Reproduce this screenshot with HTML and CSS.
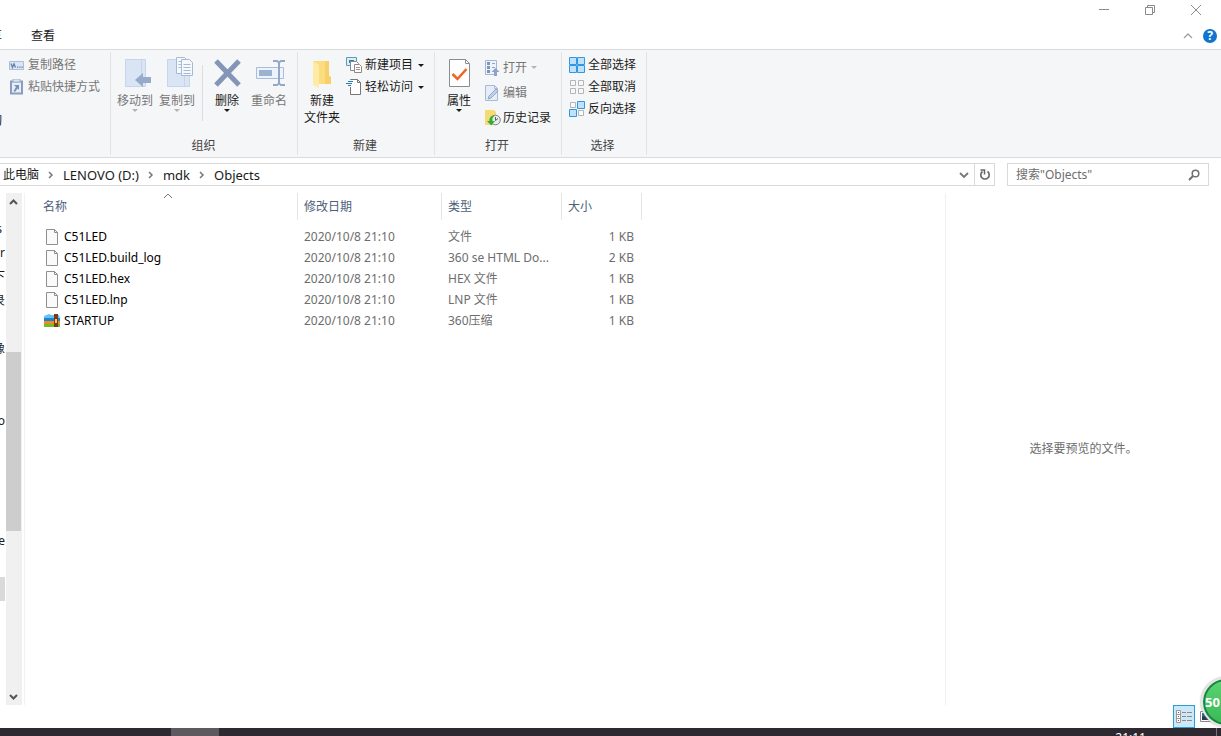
FILE: index.html
```html
<!DOCTYPE html>
<html lang="zh-CN">
<head>
<meta charset="utf-8">
<title>Objects</title>
<link rel="stylesheet" href="styles.css">
</head>
<body>
<div class="window">
  <header class="titlebar">
    <button class="caption" aria-label="最小化"><svg width="12" height="12" viewBox="0 0 12 12"><path d="M1 5.500H11" stroke="#8a8a8a"/></svg></button>
    <button class="caption" aria-label="还原"><svg width="12" height="12" viewBox="0 0 12 12" fill="none" stroke="#8a8a8a"><path d="M1.500 3.500h7v7h-7zM3.500 3V1.500h7v7H9"/></svg></button>
    <button class="caption" aria-label="关闭"><svg width="12" height="12" viewBox="0 0 12 12"><path d="M1 1l10 10M11 1L1 11" stroke="#8a8a8a"/></svg></button>
  </header>

  <nav class="tabs">
    <button class="tab tab-cut"><span>享</span></button>
    <button class="tab">查看</button>
    <span class="spacer"></span>
    <button class="plain" aria-label="折叠功能区"><svg width="10" height="8" viewBox="0 0 10 8"><path d="M1 6l4-4 4 4" fill="none" stroke="#a0a0a0" stroke-width="1.300"/></svg></button>
    <button class="help" aria-label="帮助">?</button>
  </nav>

  <section class="ribbon">
    <div class="group g-clip">
      <div class="tools">
        <div class="stack">
          <button class="small off"><svg width="16" height="16" viewBox="0 0 16 16"><path d="M.5 4.500h14v8H.5z" fill="#dbe5f3" stroke="#aebed6"/><path d="M2 6.500l1.500 4L5 7l1.500 3.500" fill="none" stroke="#657fa8" stroke-width="1.300"/><path d="M8 9.500h1.300v1.300H8zM10.300 9.500h1.300v1.300h-1.300zM12.500 9.500h1.300v1.300h-1.300z" fill="#657fa8"/></svg>复制路径</button>
          <button class="small off"><svg width="16" height="16" viewBox="0 0 16 16"><path d="M2 2.500h11v12H2z" fill="#e6eefa" stroke="#8b9dbe" stroke-width="2"/><path d="M4 0h7v3H4z" fill="#dbe3ef" stroke="#a4b2c9"/><path d="M5 6h5v5L8.500 9.500 6 13l-1.500-1L7 8z" fill="#7890b8"/></svg>粘贴快捷方式</button>
        </div>
      </div>
      <span class="cut-label">切</span>
    </div>

    <div class="group g-org">
      <div class="tools">
        <button class="big off"><svg width="32" height="32" viewBox="0 0 32 32"><path d="M6.500 2.500h20v27h-20z" fill="#d9e5f5" stroke="#c6d5ea"/><path d="M22.500 3v26" stroke="#c6d5ea"/><path d="M16 23l8-7v4h8v6h-8v4z" fill="#97aac9"/></svg>移动到<i class="drop"></i></button>
        <button class="big off"><svg width="32" height="32" viewBox="0 0 32 32"><path d="M6.500 2.500h22v27h-22z" fill="#d9e5f5" stroke="#c6d5ea"/><path d="M23.500 3v26" stroke="#c6d5ea"/><path d="M15.500.5h8l3 3v13h-11z" fill="#f5f8fc" stroke="#a8b9d3"/><path d="M20.500 2.500h8l3 3v13H20.500z" fill="#f5f8fc" stroke="#a8b9d3"/><path d="M17.500 4.500h3m-3 3h3m-3 3h3m2-3h7m-7 3h7m-7 3h7m-7 3h7" stroke="#a8b9d3"/></svg>复制到<i class="drop"></i></button>
        <span class="divider"></span>
        <button class="big"><svg width="32" height="32" viewBox="0 0 32 32"><path d="M5 4l23 24M28 4L5 28" stroke="#8496b8" stroke-width="5"/></svg>删除<i class="drop"></i></button>
        <button class="big off"><svg width="32" height="32" viewBox="0 0 32 32"><path d="M3.500 10.500h27v11h-27z" fill="#edf3fb" stroke="#a9bddb"/><path d="M6 13h13v6H6z" fill="#9db2d1"/><path d="M20 4h4l2 1.500L28 4h4M20 28h4l2-1.500 2 1.500h4M26 5v22" fill="none" stroke="#93a8c9" stroke-width="2"/></svg>重命名</button>
      </div>
      <div class="caption-text">组织</div>
    </div>

    <div class="group g-new">
      <div class="tools">
        <button class="big"><svg width="32" height="32" viewBox="0 0 32 32"><path d="M7 4h16v15l2 1v7H7z" fill="#fbdc7e"/><path d="M19 4h4v15l2 1v7h-6z" fill="#f7d068"/><path d="M7 4l6 4v23l-6-3z" fill="#ffeaa6"/></svg>新建<br>文件夹</button>
        <div class="stack">
          <button class="small"><svg width="16" height="16" viewBox="0 0 16 16"><path d="M.5.5h10v8H.5z" fill="#d8effa" stroke="#5b9bb7"/><path d="M3 3h5v3H3z" fill="#367e9f"/><path d="M4.500 4.500h6l2 2v7h-8z" fill="#fff" stroke="#8a8a8a"/><path d="M8.500 7.500h5l2 2v6h-7z" fill="#fff" stroke="#8a8a8a"/><path d="M10 10.500h4m-4 2h4" stroke="#b88"/></svg>新建项目<i class="drop"></i></button>
          <button class="small"><svg width="16" height="16" viewBox="0 0 16 16"><path d="M4.500.5h7l3 3v12h-10z" fill="#fff" stroke="#777"/><path d="M11.500.5v3h3" fill="none" stroke="#777"/><path d="M3 1h3v7H3z" fill="#f5f6f7"/><path d="M2 2.500h5M0 4.500h6M2 6.500h3" stroke="#287bb5"/></svg>轻松访问<i class="drop"></i></button>
        </div>
      </div>
      <div class="caption-text">新建</div>
    </div>

    <div class="group g-open">
      <div class="tools">
        <button class="big"><svg width="32" height="32" viewBox="0 0 32 32"><path d="M6.500 2.500h16l4 4v23h-20z" fill="#fff" stroke="#8c8c8c"/><path d="M22.500 2.500v4h4" fill="none" stroke="#8c8c8c"/><path d="M9.500 17l5 5 9-10" fill="none" stroke="#ee6423" stroke-width="2.500"/></svg>属性<i class="drop"></i></button>
        <div class="stack loose">
          <button class="small off"><svg width="16" height="16" viewBox="0 0 16 16"><path d="M.5.5h11v14H.5z" fill="#eef3fb" stroke="#a4b6d2"/><path d="M2 2h3v3H2zM2 6h3v3H2zM2 10h3v3H2z" fill="#7f95bb"/><path d="M7 3.500h3M7 7.500h3" stroke="#91a5c7"/><path d="M10.500 8l4 4H12v4H9v-4H6.500z" fill="#8ea2c5"/></svg>打开<i class="drop"></i></button>
          <button class="small off"><svg width="16" height="16" viewBox="0 0 16 16"><path d="M.5.5h9l3 3v12H.5z" fill="#e5edf8" stroke="#a9bad4"/><path d="M9.500.5v3h3" fill="none" stroke="#a9bad4"/><path d="M3 14l1-3 7-7 2 2-7 7z" fill="#c2d1e8" stroke="#91a6c9"/></svg>编辑</button>
          <button class="small"><svg width="16" height="16" viewBox="0 0 16 16"><path d="M0 0h9l2 2v13H0z" fill="#f8da75"/><circle cx="10.500" cy="10" r="4.800" fill="#e9ecec" stroke="#7d8588"/><path d="M10.500 7v3.500l2.500-2" fill="none" stroke="#596064"/><path d="M10 5.500C6 5 4 8 4.500 11H2l4.200 4.500L10 11H7.500C7 9 7.500 7 10 5.500z" fill="#35ad35"/></svg>历史记录</button>
        </div>
      </div>
      <div class="caption-text">打开</div>
    </div>

    <div class="group g-sel">
      <div class="tools">
        <div class="stack">
          <button class="small"><svg width="16" height="16" viewBox="0 0 16 16" fill="#bfe2fa" stroke="#3297e3"><path d="M.5.5h7v7h-7zM8.500.5h7v7h-7zM.5 8.500h7v7h-7zM8.500 8.500h7v7h-7z"/></svg>全部选择</button>
          <button class="small"><svg width="16" height="16" viewBox="0 0 16 16" fill="#fafafa" stroke="#b5b5b5"><path d="M1.500 1.500h5v5h-5zM9.500 1.500h5v5h-5zM1.500 9.500h5v5h-5zM9.500 9.500h5v5h-5z"/></svg>全部取消</button>
          <button class="small"><svg width="16" height="16" viewBox="0 0 16 16"><path d="M1.500 1.500h5v5h-5zM9.500 9.500h5v5h-5z" fill="#fafafa" stroke="#b5b5b5"/><path d="M8.500.5h7v7h-7zM.5 8.500h7v7h-7z" fill="#bfe2fa" stroke="#3297e3"/></svg>反向选择</button>
        </div>
      </div>
      <div class="caption-text">选择</div>
    </div>
  </section>

  <section class="address-row">
    <div class="address">
      <a href="#">此电脑</a><svg class="sep" width="6" height="8" viewBox="0 0 6 8"><path d="M1 1l3 3-3 3"/></svg>
      <a class="latin" href="#">LENOVO (D:)</a><svg class="sep" width="6" height="8" viewBox="0 0 6 8"><path d="M1 1l3 3-3 3"/></svg>
      <a class="latin" href="#">mdk</a><svg class="sep" width="6" height="8" viewBox="0 0 6 8"><path d="M1 1l3 3-3 3"/></svg>
      <a class="latin" href="#">Objects</a>
      <span class="spacer"></span>
      <button class="plain history" aria-label="以前的位置"><svg width="10" height="8" viewBox="0 0 10 8"><path d="M1 2l4 4 4-4" fill="none" stroke="#777" stroke-width="1.800"/></svg></button>
      <button class="plain refresh" aria-label="刷新"><svg width="12" height="12" viewBox="0 0 12 12"><path d="M8.500 2.500A4.200 4.200 0 1 1 3.500 2.500" fill="none" stroke="#666" stroke-width="1.600"/><path d="M1.500 1H5.500v4.500" fill="none" stroke="#666" stroke-width="1.500"/></svg></button>
    </div>
    <label class="search">
      <input type="text" placeholder='搜索"Objects"' aria-label="搜索">
      <svg width="12" height="12" viewBox="0 0 12 12" fill="none" stroke="#707070"><circle cx="7.500" cy="4.500" r="3.300" stroke-width="1.500"/><path d="M5 7L1 11" stroke-width="2"/></svg>
    </label>
  </section>

  <main class="content">
    <aside class="tree">
      <div class="node"><span>s</span>&nbsp;</div>
      <div class="node">r</div>
      <div class="node">下</div>
      <div class="node">录</div>
      <div class="node"></div>
      <div class="node">像</div>
      <div class="node"></div>
      <div class="node"></div>
      <div class="node">Do</div>
      <div class="node"></div>
      <div class="node"></div>
      <div class="node"></div>
      <div class="node"></div>
      <div class="node">e</div>
      <div class="node"></div>
      <div class="node current"></div>
    </aside>
    <div class="scrollbar">
      <svg width="16" height="18" viewBox="0 0 16 18"><path d="M4 11l3.500-3.500L11 11" fill="none" stroke="#555" stroke-width="2"/></svg>
      <div class="track"><div class="thumb"></div></div>
      <svg width="16" height="18" viewBox="0 0 16 18"><path d="M4 8l3.500 3.500L11 8" fill="none" stroke="#555" stroke-width="2"/></svg>
    </div>
    <section class="files">
      <table>
        <colgroup><col class="c-name"><col class="c-date"><col class="c-type"><col class="c-size"></colgroup>
        <thead>
          <tr><th>名称<svg class="sort" width="10" height="6" viewBox="0 0 10 6"><path d="M1 5l4-4 4 4" fill="none" stroke="#777"/></svg></th><th>修改日期</th><th>类型</th><th>大小</th></tr>
        </thead>
        <tbody>
          <tr><td><div class="file"><svg width="16" height="16" viewBox="0 0 16 16"><path d="M2.500.5h8l3 3v12h-11z" fill="#fafafa" stroke="#8f8f8f"/><path d="M10.500.5v3h3" fill="none" stroke="#8f8f8f"/></svg>C51LED</div></td><td>2020/10/8 21:10</td><td>文件</td><td>1 KB</td></tr>
          <tr><td><div class="file"><svg width="16" height="16" viewBox="0 0 16 16"><path d="M2.500.5h8l3 3v12h-11z" fill="#fafafa" stroke="#8f8f8f"/><path d="M10.500.5v3h3" fill="none" stroke="#8f8f8f"/></svg>C51LED.build_log</div></td><td>2020/10/8 21:10</td><td>360 se HTML Do...</td><td>2 KB</td></tr>
          <tr><td><div class="file"><svg width="16" height="16" viewBox="0 0 16 16"><path d="M2.500.5h8l3 3v12h-11z" fill="#fafafa" stroke="#8f8f8f"/><path d="M10.500.5v3h3" fill="none" stroke="#8f8f8f"/></svg>C51LED.hex</div></td><td>2020/10/8 21:10</td><td>HEX 文件</td><td>1 KB</td></tr>
          <tr><td><div class="file"><svg width="16" height="16" viewBox="0 0 16 16"><path d="M2.500.5h8l3 3v12h-11z" fill="#fafafa" stroke="#8f8f8f"/><path d="M10.500.5v3h3" fill="none" stroke="#8f8f8f"/></svg>C51LED.lnp</div></td><td>2020/10/8 21:10</td><td>LNP 文件</td><td>1 KB</td></tr>
          <tr><td><div class="file"><svg width="16" height="16" viewBox="0 0 16 16"><path d="M0 3l5-2 2 1h8l1 3H0z" fill="#62c4f5"/><path d="M0 5h16v4H0z" fill="#1f83d4"/><path d="M0 8h16v4H0z" fill="#f28a1c"/><path d="M0 11h16v3H0z" fill="#6fbd2a"/><path d="M10 1h4v13h-4z" fill="#7b3a1c"/><path d="M11 6h2v4h-2z" fill="#f2c464"/></svg>STARTUP</div></td><td>2020/10/8 21:10</td><td>360压缩</td><td>1 KB</td></tr>
        </tbody>
      </table>
    </section>
    <aside class="preview">选择要预览的文件。</aside>
  </main>

  <footer class="status">
    <button class="view active" aria-label="详细信息"><svg width="16" height="14" viewBox="0 0 16 14"><path d="M.5.5h4v12h-4zM.5 4.500h4m-4 4h4" fill="#fff" stroke="#999"/><path d="M2 2h1v1H2z" fill="#2a6fc0"/><path d="M2 6h1v1H2zM2 10h1v1H2z" fill="#c33"/><path d="M6 2.500h4m1 0h5m-10 4h4m1 0h5m-10 4h4m1 0h5" stroke="#8a8a8a"/></svg></button>
    <button class="view" aria-label="大图标"><svg width="16" height="12" viewBox="0 0 16 12"><path d="M.5.5h15v10H.5z" fill="#fff" stroke="#888"/><path d="M2 2h12v7H2z" fill="#315da8"/><path d="M2 6l4-2 4 3v2H2z" fill="#26384d"/></svg></button>
  </footer>

  <div class="taskbar"><span class="task"></span><span class="clock">21:11</span><span class="desktop"></span></div>
  <div class="meter">50</div>
</div>
</body>
</html>
```
FILE: styles.css
```css
* { box-sizing: border-box; }
body {
  margin: 0;
  font: 12px/16px "Noto Sans", "Noto Sans CJK SC", sans-serif;
  color: #1a1a1a;
  background: #fff;
}
button {
  font: inherit;
  color: inherit;
  background: none;
  border: 0;
  padding: 0;
}
svg { flex: none; display: block; }
a { color: inherit; text-decoration: none; }

.window {
  position: relative;
  display: flex;
  flex-direction: column;
  height: 100vh;
  overflow: hidden;
}
.spacer { flex: 1; }

.titlebar { display: flex; justify-content: flex-end; height: 20px; padding-right: 2px; }
.caption { display: grid; place-items: center; width: 46px; }

.tabs { display: flex; align-items: center; height: 29px; padding: 2px 4px 0 0; }
.tab { padding: 0 18px; }
.tab-cut { display: flex; justify-content: flex-end; width: 2px; margin-right: 11px; padding: 0; overflow: hidden; }
.plain { display: grid; place-items: center; }
.help {
  width: 14px;
  height: 14px;
  margin-left: 10px;
  border-radius: 50%;
  background: #0f75d1;
  color: #fff;
  font-weight: bold;
  line-height: 14px;
}

.ribbon {
  display: flex;
  height: 109px;
  padding: 2px 0;
  background: #f5f6f7;
  border-top: 1px solid #dadbdc;
  border-bottom: 1px solid #dadbdc;
}
.group {
  position: relative;
  display: flex;
  flex-direction: column;
  justify-content: space-between;
  border-right: 1px solid #e2e3e4;
}
.g-clip { width: 111px; padding-left: 9px; }
.g-org { width: 187px; padding-left: 3px; }
.g-new { width: 137px; padding-left: 2px; }
.g-open { width: 127px; padding-left: 2px; }
.g-sel { width: 85px; padding-left: 7px; }
.tools { display: flex; align-items: flex-start; }
.caption-text { padding-right: 4px; text-align: center; color: #444; line-height: 18px; }
.g-sel > .caption-text { padding-right: 10px; }
.cut-label {
  position: absolute;
  left: 0;
  top: 61px;
  display: flex;
  justify-content: flex-end;
  width: 2px;
  overflow: hidden;
}
.big {
  display: flex;
  flex-direction: column;
  align-items: center;
  width: 42px;
  padding-top: 5px;
  line-height: 17px;
}
.big svg { margin-bottom: 3px; }
.off { color: #777; }
.drop { flex: none; border: 3px solid transparent; border-top-color: currentColor; border-bottom: 0; }
.off .drop { border-top-color: #b4b4b4; }
.divider { width: 1px; height: 56px; margin: 13px 3px 0 4px; background: #dcdddf; }
.g-new .big, .g-open .big { width: 44px; }
.stack { display: flex; flex-direction: column; padding-top: 2px; }
.small { display: flex; align-items: center; gap: 3px; height: 22px; white-space: nowrap; }
.small .drop { margin-left: 2px; }
.loose { padding: 3px 0 0 4px; }
.loose .small { height: 25px; gap: 2px; }
.g-new .stack { padding-left: 2px; }

.address-row { display: flex; gap: 12px; padding: 5px 12px 0 0; }
.address {
  flex: 1;
  display: flex;
  align-items: center;
  height: 23px;
  padding-left: 3px;
  border: 1px solid #d9d9d9;
  border-left: 0;
}
.latin { font-size: 13px; }
.sep { margin: 0 9px; fill: none; stroke: #777; stroke-width: 1.5px; }
.history { width: 20px; height: 21px; }
.refresh { width: 20px; height: 21px; border-left: 1px solid #d9d9d9; }
.search {
  display: flex;
  align-items: center;
  width: 202px;
  height: 23px;
  padding: 0 8px;
  border: 1px solid #d9d9d9;
}
.search input { flex: 1; min-width: 0; padding: 0; border: 0; outline: 0; font: inherit; }
.search input::placeholder { color: #6d6d6d; opacity: 1; }

.content { flex: 1; display: flex; min-height: 0; padding-top: 7px; }
.tree { width: 6px; padding: 24px 1px 0 0; overflow: hidden; }
.node {
  display: flex;
  align-items: center;
  justify-content: flex-end;
  height: 24px;
  overflow: hidden;
}
.current { background: #d9d9d9; }
.scrollbar { display: flex; flex-direction: column; width: 16px; background: #f0f0f0; }
.track { flex: 1; display: grid; grid-template-rows: 141fr 179fr 156fr; }
.thumb { grid-row: 2; margin-right: 1px; background: #cdcdcd; }
.files { flex: 1; margin-left: 2px; border-left: 1px solid #f2f2f2; }
.preview {
  display: grid;
  place-items: center;
  width: 276px;
  border-left: 1px solid #f0f0f0;
  color: #6d6d6d;
}

table { table-layout: fixed; width: 617px; border-collapse: separate; border-spacing: 0; }
.c-name { width: 273px; }
.c-date { width: 144px; }
.c-type { width: 120px; }
.c-size { width: 80px; }
th {
  position: relative;
  height: 27px;
  padding: 0 6px;
  border-right: 1px solid #e5e5e5;
  color: #4c607a;
  font-weight: normal;
  text-align: left;
}
th:first-child { padding-left: 18px; }
.sort { position: absolute; left: 138px; top: 0; }
td { height: 21px; padding: 0 6px; color: #6d6d6d; white-space: nowrap; }
td:first-child { padding-left: 19px; color: #000; }
td:last-child { padding-right: 8px; text-align: right; }
tbody::before { content: ""; display: block; height: 6px; }
.file { display: flex; align-items: center; gap: 4px; }

.status { display: flex; justify-content: flex-end; gap: 2px; height: 23px; padding-right: 2px; }
.view { display: grid; place-items: center; width: 22px; border: 1px solid transparent; }
.active { background: #cce8f7; border-color: #26a0da; }

.taskbar { display: flex; height: 8px; background: #2e2930; overflow: hidden; }
.task { width: 48px; margin-left: 171px; background: #5d595f; }
.clock { margin-left: auto; padding-top: 2px; color: #fff; }
.desktop { width: 5px; margin-left: 70px; border-left: 1px solid #77737a; }

.meter {
  position: absolute;
  right: -30px;
  bottom: 9px;
  width: 50px;
  height: 50px;
  padding-left: 2px;
  border: 2px solid #e4e4e4;
  border-radius: 50%;
  background: linear-gradient(#5dd374, #37b955);
  box-shadow: inset 0 0 0 2px #168443, 0 0 2px #888;
  color: #fff;
  font-size: 13px;
  font-weight: bold;
  line-height: 46px;
}
```
